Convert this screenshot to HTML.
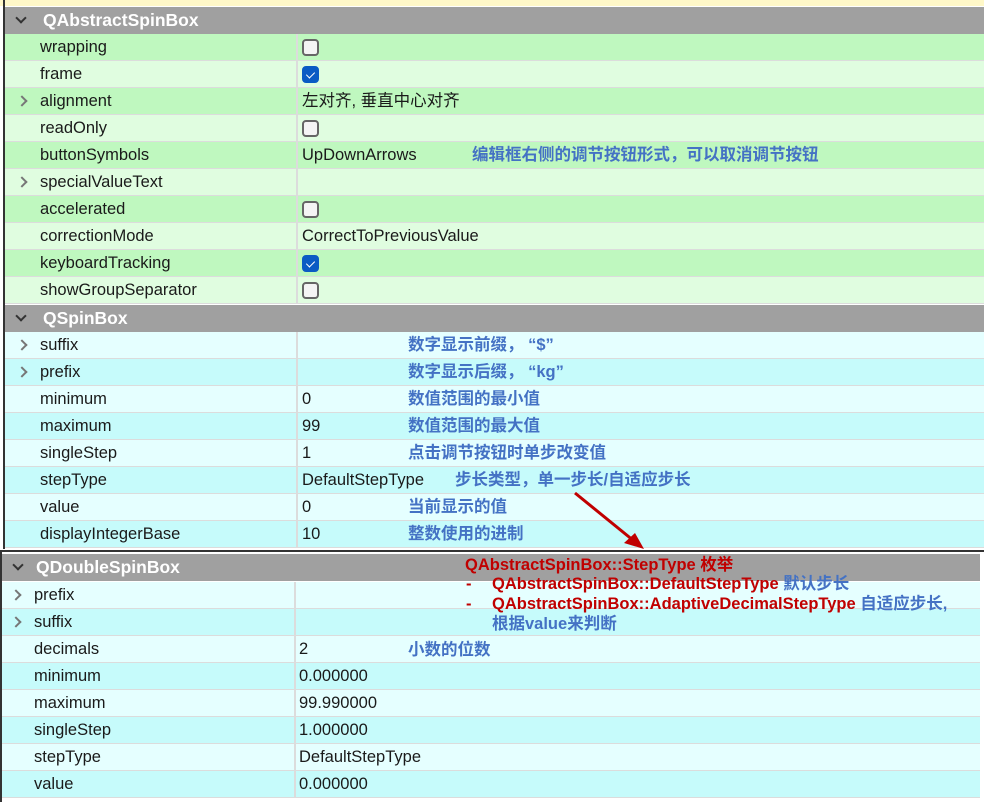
<!DOCTYPE html>
<html><head><meta charset="utf-8"><style>
*{margin:0;padding:0;box-sizing:border-box}
body{width:984px;height:802px;background:#fff;position:relative;overflow:hidden;font-family:"Liberation Sans","Noto Sans CJK SC",sans-serif;font-size:16.5px;color:#1a1a1a}
.p{position:absolute}
.row{position:absolute;height:27px;border-bottom:1px solid #dcdcdc;line-height:26px}
.row .n{position:absolute;left:35px;top:0;white-space:nowrap}
.row .v{position:absolute;top:0;white-space:nowrap}
.row .d{position:absolute;top:0;width:2px;height:27px;background:#dcdcdc}
.hd{position:absolute;height:27px;background:#a0a0a0;color:#fff;font-weight:bold;font-size:17.5px;line-height:26px}
.hd span{position:absolute;left:38px;top:0}
.hd i{position:absolute;left:12px;top:7px;width:8px;height:8px;border-right:2px solid #333;border-bottom:2px solid #333;transform:rotate(45deg)}
.ar{position:absolute;left:13px;top:9px;width:8px;height:8px;border-right:2px solid #777;border-top:2px solid #777;transform:rotate(45deg)}
.cb{position:absolute;top:5px;width:17px;height:17px;border:2px solid #666;border-radius:4px;background:#f4f4f4}
.ck{background:#0a5bc4;border-color:#0a5bc4}
.ck:after{content:"";position:absolute;left:4px;top:2px;width:4px;height:7px;border-right:1.5px solid #fff;border-bottom:1.5px solid #fff;transform:rotate(45deg)}
.g1{background:#bff8bf}.g2{background:#e0fde0}
.c1{background:#c6fbfb}.c2{background:#e5ffff}
.b{position:absolute;color:#4472c4;font-weight:bold;font-size:16.5px;line-height:20px;white-space:nowrap}
.r{position:absolute;color:#c00000;font-weight:bold;font-size:16.5px;line-height:20px;white-space:nowrap}
</style></head><body>
<div class="p" style="left:0;top:0;width:984px;height:6px;background:#fff8c8"></div>
<div class="p" style="left:3px;top:0;width:2px;height:549px;background:#333"></div>
<div class="hd" style="left:5px;top:7px;width:979px"><i></i><span>QAbstractSpinBox</span></div>

<div class="row g1" style="left:5px;top:34px;width:979px"><div class="n">wrapping</div><div class="d" style="left:291px"></div><div class="cb" style="left:297px"></div></div>
<div class="row g2" style="left:5px;top:61px;width:979px"><div class="n">frame</div><div class="d" style="left:291px"></div><div class="cb ck" style="left:297px"></div></div>
<div class="row g1" style="left:5px;top:88px;width:979px"><div class="ar"></div><div class="n">alignment</div><div class="d" style="left:291px"></div><div class="v" style="left:297px">左对齐, 垂直中心对齐</div></div>
<div class="row g2" style="left:5px;top:115px;width:979px"><div class="n">readOnly</div><div class="d" style="left:291px"></div><div class="cb" style="left:297px"></div></div>
<div class="row g1" style="left:5px;top:142px;width:979px"><div class="n">buttonSymbols</div><div class="d" style="left:291px"></div><div class="v" style="left:297px">UpDownArrows</div></div>
<div class="row g2" style="left:5px;top:169px;width:979px"><div class="ar"></div><div class="n">specialValueText</div><div class="d" style="left:291px"></div></div>
<div class="row g1" style="left:5px;top:196px;width:979px"><div class="n">accelerated</div><div class="d" style="left:291px"></div><div class="cb" style="left:297px"></div></div>
<div class="row g2" style="left:5px;top:223px;width:979px"><div class="n">correctionMode</div><div class="d" style="left:291px"></div><div class="v" style="left:297px">CorrectToPreviousValue</div></div>
<div class="row g1" style="left:5px;top:250px;width:979px"><div class="n">keyboardTracking</div><div class="d" style="left:291px"></div><div class="cb ck" style="left:297px"></div></div>
<div class="row g2" style="left:5px;top:277px;width:979px"><div class="n">showGroupSeparator</div><div class="d" style="left:291px"></div><div class="cb" style="left:297px"></div></div>

<div class="hd" style="left:5px;top:305px;width:979px"><i></i><span>QSpinBox</span></div>
<div class="row c2" style="left:5px;top:332px;width:979px"><div class="ar"></div><div class="n">suffix</div><div class="d" style="left:291px"></div></div>
<div class="row c1" style="left:5px;top:359px;width:979px"><div class="ar"></div><div class="n">prefix</div><div class="d" style="left:291px"></div></div>
<div class="row c2" style="left:5px;top:386px;width:979px"><div class="n">minimum</div><div class="d" style="left:291px"></div><div class="v" style="left:297px">0</div></div>
<div class="row c1" style="left:5px;top:413px;width:979px"><div class="n">maximum</div><div class="d" style="left:291px"></div><div class="v" style="left:297px">99</div></div>
<div class="row c2" style="left:5px;top:440px;width:979px"><div class="n">singleStep</div><div class="d" style="left:291px"></div><div class="v" style="left:297px">1</div></div>
<div class="row c1" style="left:5px;top:467px;width:979px"><div class="n">stepType</div><div class="d" style="left:291px"></div><div class="v" style="left:297px">DefaultStepType</div></div>
<div class="row c2" style="left:5px;top:494px;width:979px"><div class="n">value</div><div class="d" style="left:291px"></div><div class="v" style="left:297px">0</div></div>
<div class="row c1" style="left:5px;top:521px;width:979px"><div class="n">displayIntegerBase</div><div class="d" style="left:291px"></div><div class="v" style="left:297px">10</div></div>

<div class="p" style="left:0;top:550px;width:984px;height:2px;background:#333"></div>
<div class="p" style="left:0;top:552px;width:2px;height:250px;background:#333"></div>
<div class="hd" style="left:2px;top:554px;width:978px"><i></i><span style="left:34px">QDoubleSpinBox</span></div>
<div class="row c2" style="left:2px;top:582px;width:978px"><div class="ar" style="left:10px"></div><div class="n" style="left:32px">prefix</div><div class="d" style="left:292px"></div></div>
<div class="row c1" style="left:2px;top:609px;width:978px"><div class="ar" style="left:10px"></div><div class="n" style="left:32px">suffix</div><div class="d" style="left:292px"></div></div>
<div class="row c2" style="left:2px;top:636px;width:978px"><div class="n" style="left:32px">decimals</div><div class="d" style="left:292px"></div><div class="v" style="left:297px">2</div></div>
<div class="row c1" style="left:2px;top:663px;width:978px"><div class="n" style="left:32px">minimum</div><div class="d" style="left:292px"></div><div class="v" style="left:297px">0.000000</div></div>
<div class="row c2" style="left:2px;top:690px;width:978px"><div class="n" style="left:32px">maximum</div><div class="d" style="left:292px"></div><div class="v" style="left:297px">99.990000</div></div>
<div class="row c1" style="left:2px;top:717px;width:978px"><div class="n" style="left:32px">singleStep</div><div class="d" style="left:292px"></div><div class="v" style="left:297px">1.000000</div></div>
<div class="row c2" style="left:2px;top:744px;width:978px"><div class="n" style="left:32px">stepType</div><div class="d" style="left:292px"></div><div class="v" style="left:297px">DefaultStepType</div></div>
<div class="row c1" style="left:2px;top:771px;width:978px"><div class="n" style="left:32px">value</div><div class="d" style="left:292px"></div><div class="v" style="left:297px">0.000000</div></div>

<div class="b" style="left:472px;top:145px">编辑框右侧的调节按钮形式，可以取消调节按钮</div>
<div class="b" style="left:408px;top:335px">数字显示前缀，&nbsp;“$”</div>
<div class="b" style="left:408px;top:362px">数字显示后缀，&nbsp;“kg”</div>
<div class="b" style="left:408px;top:389px">数值范围的最小值</div>
<div class="b" style="left:408px;top:416px">数值范围的最大值</div>
<div class="b" style="left:408px;top:443px">点击调节按钮时单步改变值</div>
<div class="b" style="left:455px;top:470px">步长类型，单一步长/自适应步长</div>
<div class="b" style="left:408px;top:497px">当前显示的值</div>
<div class="b" style="left:408px;top:524px">整数使用的进制</div>
<div class="b" style="left:408px;top:640px">小数的位数</div>

<div class="r" style="left:465px;top:555px">QAbstractSpinBox::StepType 枚举</div>
<div class="r" style="left:466px;top:574px">-</div>
<div class="r" style="left:492px;top:574px">QAbstractSpinBox::DefaultStepType <span style="color:#4472c4">默认步长</span></div>
<div class="r" style="left:466px;top:594px">-</div>
<div class="r" style="left:492px;top:594px">QAbstractSpinBox::AdaptiveDecimalStepType <span style="color:#4472c4">自适应步长,</span></div>
<div class="b" style="left:492px;top:614px">根据value来判断</div>

<svg class="p" style="left:0;top:0" width="984" height="802"><line x1="575" y1="493" x2="634" y2="541" stroke="#c00000" stroke-width="3"/><polygon points="644,549 624,543 635,533" fill="#c00000"/></svg>
</body></html>
